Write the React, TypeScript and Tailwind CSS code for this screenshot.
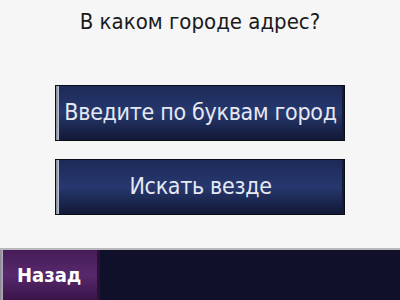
export default function App() {
  return (
    <div
      className="w-[400px] h-[300px] bg-[#f6f6f6] flex flex-col overflow-hidden"
      style={{ fontFamily: '"DejaVu Sans", sans-serif' }}
    >
      {/* title */}
      <div className="h-[42px] flex items-center justify-center pt-[1px] text-[22px] text-[#1a1a1a] [font-stretch:condensed]">
        В каком городе адрес?
      </div>

      {/* options */}
      <div className="flex flex-col items-center gap-[18px] mt-[43px]">
        <OptionButton label="Введите по буквам город" />
        <OptionButton label="Искать везде" />
      </div>

      <div className="flex-1" />

      {/* bottom bar */}
      <div className="h-[52px] border-t-2 border-[#b8b8bc] bg-[#10102a] flex">
        <div className="w-[100px] flex border-r-[3px] border-[#2a1234]">
          <div className="w-[3px] bg-gradient-to-r from-[#8a8494] to-[#b4aebc]" />
          <div className="flex-1 flex items-center pl-[14px] bg-gradient-to-b from-[#461c58] via-[#57296c] to-[#3a1449] text-white text-[20px] font-bold [font-stretch:condensed]">
            Назад
          </div>
        </div>
      </div>
    </div>
  );
}

function OptionButton({ label }: { label: string }) {
  return (
    <div className="w-[290px] h-[56px] flex border border-[#0a0d1a] bg-[#0a0d1a]">
      <div className="w-[3px] bg-gradient-to-r from-[#7c8496] to-[#c4c8d2]" />
      <div className="flex-1 flex items-center justify-center pb-[2px] bg-gradient-to-b from-[#1d2a58] via-[#26386f] to-[#121936] text-[#e6e9f2] text-[23px] whitespace-nowrap tracking-[-0.3px] [font-stretch:condensed] border-r-2 border-[#151b36]">
        {label}
      </div>
    </div>
  );
}
